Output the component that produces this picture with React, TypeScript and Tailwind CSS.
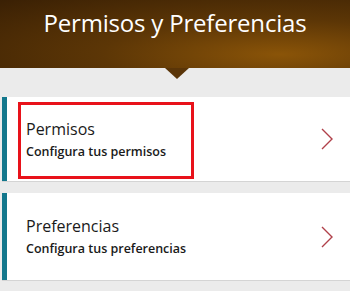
import React from "react";

const ITEMS = [
  { title: "Permisos", sub: "Configura tus permisos", highlight: true, h: "h-[84px]" },
  { title: "Preferencias", sub: "Configura tus preferencias", highlight: false, h: "h-[87px]" },
];

function Chevron() {
  return (
    <svg width="14" height="24" viewBox="0 0 14 24" fill="none">
      <path d="M2 2 L12 12 L2 22" stroke="#b0404a" strokeWidth="1.4" />
    </svg>
  );
}

export default function App() {
  return (
    <div className="w-[350px] h-[291px] bg-[#ebebeb] overflow-hidden font-['Open_Sans',sans-serif]">
      {/* Header */}
      <div className="relative h-[68px] bg-[radial-gradient(ellipse_at_80%_80%,#8a5408_0%,#5c3606_45%,#3a2004_100%)]">
        <h1 className="pt-[7px] text-center text-[24px] leading-[32px] text-white tracking-[-0.2px]">
          Permisos y Preferencias
        </h1>
        <div className="absolute left-[165px] top-[68px] w-0 h-0 border-l-[12px] border-r-[12px] border-t-[11px] border-l-transparent border-r-transparent border-t-[#5a3508]" />
      </div>

      <div className="flex flex-col gap-[12px] pt-[29px]">
        {ITEMS.map((it) => (
          <div
            key={it.title}
            className={`relative flex items-center ${it.h} ml-[2px] bg-white border-l-[5px] border-[#13778c] shadow-[0_1px_0_#d4d4d4]`}
          >
            {it.highlight && (
              <div className="absolute left-[11px] top-[5px] w-[176px] h-[77px] border-[3px] border-[#e8121a]" />
            )}
            <div className="flex-1 pl-[19px]">
              <div className="text-[16px] leading-[22px] text-[#1a1a1a]">{it.title}</div>
              <div className="mt-[3px] text-[12.5px] leading-[18px] font-semibold text-[#1a1a1a]">
                {it.sub}
              </div>
            </div>
            <div className="pr-[16px]">
              <Chevron />
            </div>
          </div>
        ))}
      </div>
    </div>
  );
}
